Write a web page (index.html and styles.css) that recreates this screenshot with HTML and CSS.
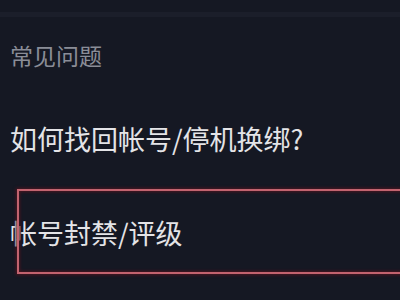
FILE: index.html
```html
<!DOCTYPE html>
<html lang="zh-CN">
<head>
  <meta charset="UTF-8">
  <meta name="viewport" content="width=device-width, initial-scale=1.0">
  <title>常见问题</title>
  <link rel="stylesheet" href="styles.css">
</head>
<body>
  <div class="topbar"></div>
  <h3 class="section-title">常见问题</h3>
  <ul class="faq">
    <li class="faq-item">如何找回帐号/停机换绑?</li>
    <li class="faq-item">
      帐号封禁/评级
      <span class="highlight"></span>
    </li>
  </ul>
</body>
</html>
```
FILE: styles.css
```css
body {
  margin: 0;
  background: #151823;
  font-family: "Noto Sans CJK SC", "Noto Sans", sans-serif;
  overflow: hidden;
}
.topbar {
  height: 12px;
  border-bottom: 5px solid #1b1e2a;
  margin-bottom: 1px;
}
.section-title {
  margin: 23px 0 0;
  padding-left: 10px;
  font-size: 23px;
  line-height: 30px;
  font-weight: normal;
  color: #8a8d97;
}
.faq {
  list-style: none;
  margin: 21px 0 0;
  padding: 0;
}
.faq-item {
  position: relative;
  height: 94px;
  display: flex;
  align-items: center;
  padding-left: 10px;
  font-size: 27px;
  color: #e4e4e7;
}
/* rode markering rond het tweede item */
.highlight {
  position: absolute;
  left: 17px;
  top: 4px;
  right: -20px;
  bottom: 5px;
  border: 2px solid #c2636f;
  box-shadow: 0 0 3px 1px #4a1520, inset 0 0 3px 1px #4a1520;
}
```
